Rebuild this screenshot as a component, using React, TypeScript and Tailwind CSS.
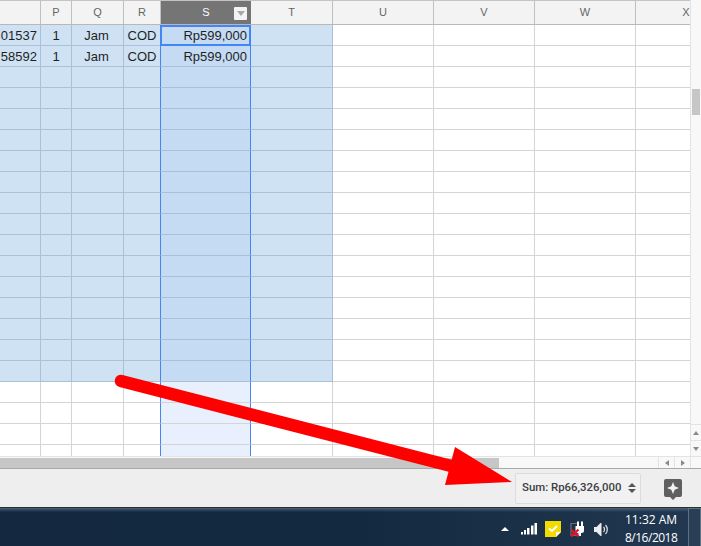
import React from 'react';

const cols = [
  { label: '', w: 'w-[41px]', sel: true },
  { label: 'P', w: 'w-[31px]', sel: true },
  { label: 'Q', w: 'w-[52px]', sel: true },
  { label: 'R', w: 'w-[37px]', sel: true },
  { label: 'S', w: 'w-[90px]', sel: true },
  { label: 'T', w: 'w-[82px]', sel: true },
  { label: 'U', w: 'w-[101px]', sel: false },
  { label: 'V', w: 'w-[101px]', sel: false },
  { label: 'W', w: 'w-[101px]', sel: false },
  { label: 'X', w: 'w-[101px]', sel: false },
];

const data: Record<number, string[]> = {
  0: ['01537', '1', 'Jam', 'COD', 'Rp599,000'],
  1: ['58592', '1', 'Jam', 'COD', 'Rp599,000'],
};

function Cell({ row, col }: { row: number; col: number }) {
  const c = cols[col];
  const selectedRow = row < 17;
  const isS = col === 4;
  let cls = 'border-r border-b border-[#d4d4d4] bg-white';
  if (selectedRow && c.sel) {
    cls = isS ? 'border-b border-[#adbfd6] bg-[#c5daf3]' : 'border-r border-b border-[#adbfd6] bg-[#cfe2f3]';
  } else if (isS) {
    cls = 'border-b border-[#d4d4d4] bg-[#e8f0fd]';
  }
  const text = data[row]?.[col];
  let align = 'justify-center';
  if (col === 0 || col === 4) align = 'justify-end pr-[3px]';
  if (col === 2) align = 'justify-center pr-[2px]';
  return (
    <div
      className={`${isS ? 'w-[91px] -ml-px border-x border-x-[#4285f4]' : `${c.w} overflow-hidden`} h-[21px] shrink-0 flex items-center relative pt-[2px] text-[13px] text-[#1f1f1f] ${align} ${cls}`}
    >
      {text}
      {isS && row === 0 && <div className="absolute -left-px -right-px top-0 -bottom-px border-2 border-[#4285f4]" />}
    </div>
  );
}

function Header() {
  return (
    <div className="flex h-[25px] bg-[#f3f3f3] border-b border-[#b8b8b8] border-t border-t-[#c4c4c4]">
      {cols.map((c, i) => (
        <div
          key={i}
          className={`${c.w} shrink-0 flex items-center justify-center relative text-[11px] ${i === 4 ? 'bg-[#757575] text-white' : 'border-r border-[#c0c0c0] text-[#666]'}`}
        >
          {c.label}
          {i === 4 && (
            <div className="absolute right-[4px] top-[6px] w-[13px] h-[13px] bg-[#f3f3f3] rounded-[1px] flex items-center justify-center">
              <div className="w-0 h-0 border-x-[4px] border-x-transparent border-t-[5px] border-t-[#a8a8a8]" />
            </div>
          )}
        </div>
      ))}
    </div>
  );
}

function SheetsExplore() {
  return (
    <svg width="18" height="21" viewBox="0 0 18 21">
      <path d="M2 0h14a2 2 0 0 1 2 2v14a2 2 0 0 1-2 2h-4l-3 3-3-3H2a2 2 0 0 1-2-2V2a2 2 0 0 1 2-2z" fill="#5f5f5f" />
      <path d="M9 3 10.7 7.3 15 9 10.7 10.7 9 15 7.3 10.7 3 9 7.3 7.3z" fill="#f2f2f2" />
    </svg>
  );
}

function Tray() {
  return (
    <div className="flex items-center mt-[3px] text-white">
      <div className="w-0 h-0 border-x-[4px] border-x-transparent border-b-[4px] border-b-white mr-[12px]" />
      <svg width="16" height="12" viewBox="0 0 16 12" className="mr-[8px]">
        <rect x="0" y="9" width="2" height="2.5" fill="#fff" />
        <rect x="3" y="7" width="2" height="4.5" fill="#fff" />
        <rect x="6" y="5" width="2.5" height="6.5" fill="#fff" />
        <rect x="10" y="2.5" width="2.5" height="9" fill="#fff" />
        <rect x="13.5" y="0" width="2.5" height="11.5" fill="#fff" />
      </svg>
      <svg width="16" height="16" viewBox="0 0 16 16" className="mr-[9px]">
        <path d="M0 0h16v11l-5 5H0z" fill="#f2dc00" />
        <path d="M16 11l-5 5v-5z" fill="#f4f4e8" />
        <path d="M4 7.5l3 2.5 5-5" fill="none" stroke="#fff" strokeWidth="2" />
      </svg>
      <svg width="15" height="16" viewBox="0 0 15 16" className="mr-[9px]">
        <path d="M1 2.5h7v12H1z" fill="none" stroke="#6a6f76" strokeWidth="1.2" />
        <path d="M5.5 5h8.5v4.5a2.5 2.5 0 0 1-2.5 2.5h-3.500a2.500 2.500 0 0 1-2.500-2.500z" fill="#fff" />
        <rect x="7" y="0.500" width="2" height="4.500" fill="#fff" />
        <rect x="11" y="0.500" width="2" height="4.500" fill="#fff" />
        <rect x="8.500" y="12" width="2.500" height="3" fill="#fff" />
        <path d="M1 8.500l7.500 7M8.500 8.500l-7.500 7" stroke="#e4142a" strokeWidth="2.200" />
      </svg>
      <svg width="14" height="13" viewBox="0 0 14 13">
        <path d="M0 4h2.500l4-4h1v13h-1l-4-4H0z" fill="#ececec" />
        <path d="M9.500 4a3.500 3.500 0 0 1 0 5M11.500 2a6.500 6.500 0 0 1 0 9" fill="none" stroke="#dfe5ea" strokeWidth="1.200" />
      </svg>
    </div>
  );
}

export default function App() {
  const rows = Array.from({ length: 21 }, (_, i) => i);
  return (
    <div className="w-[701px] h-[546px] overflow-hidden relative flex flex-col bg-white font-['Liberation_Sans',Arial,sans-serif]">
      <div className="flex h-[456px] shrink-0">
        <div className="w-[690px] shrink-0 overflow-hidden">
          <Header />
          {rows.map((r) => (
            <div key={r} className="flex">
              {cols.map((_, i) => (
                <Cell key={i} row={r} col={i} />
              ))}
            </div>
          ))}
        </div>
        <div className="flex-1 flex flex-col bg-[#f8f8f8] border-l border-[#e3e3e3]">
          <div className="h-[89px]" />
          <div className="h-[26px] ml-[1px] mr-[1px] bg-[#c6c6c6]" />
          <div className="flex-1" />
          <div className="h-[16px] flex items-center justify-center border-t border-[#e3e3e3]">
            <div className="w-0 h-0 border-x-[3px] border-x-transparent border-b-[4px] border-b-[#8a8a8a]" />
          </div>
          <div className="h-[16px] flex items-center justify-center border-t border-[#e3e3e3]">
            <div className="w-0 h-0 border-x-[3px] border-x-transparent border-t-[4px] border-t-[#8a8a8a]" />
          </div>
        </div>
      </div>

      <div className="h-[12px] shrink-0 flex bg-[#f8f8f8] border-t border-[#e3e3e3]">
        <div className="w-[499px] h-[10px] mt-px bg-[#c6c6c6]" />
        <div className="flex-1" />
        <div className="w-[16px] flex items-center justify-center border-l border-[#e3e3e3]">
          <div className="w-0 h-0 border-y-[3px] border-y-transparent border-r-[4px] border-r-[#8a8a8a]" />
        </div>
        <div className="w-[16px] flex items-center justify-center border-l border-[#e3e3e3]">
          <div className="w-0 h-0 border-y-[3px] border-y-transparent border-l-[4px] border-l-[#8a8a8a]" />
        </div>
        <div className="w-[11px] border-l border-[#e3e3e3]" />
      </div>

      <div className="h-[39px] shrink-0 flex items-center justify-end bg-[#eeeeee] border-t border-[#a9a9a9] pr-[19px]">
        <div className="h-[31px] w-[126px] mr-[23px] flex items-center justify-between pl-[6px] pr-[4px] border border-[#dcdcdc] rounded-[2px] bg-[#f1f1f1]">
          <span className="font-['Roboto',sans-serif] font-medium text-[11.4px] text-[#3c4043] whitespace-nowrap">Sum: Rp66,326,000</span>
          <div className="flex flex-col gap-[2px]">
            <div className="w-0 h-0 border-x-[4px] border-x-transparent border-b-[4px] border-b-[#555]" />
            <div className="w-0 h-0 border-x-[4px] border-x-transparent border-t-[4px] border-t-[#555]" />
          </div>
        </div>
        <div className="mt-[2px] flex">
          <SheetsExplore />
        </div>
      </div>

      <div className="flex-1 flex items-center justify-end relative border-t border-[#2a2f36] bg-gradient-to-r from-[#14293f] via-[#12293f] to-[#223850]">
        <div className="absolute left-0 right-0 top-0 h-[4px] bg-gradient-to-b from-[#4a6076] to-transparent" />
        <Tray />
        <div className="w-[52px] ml-[17px] mr-[11px] mt-[3px] font-['Open_Sans',sans-serif] text-[12px] leading-[18px] text-white whitespace-nowrap">
          <div className="text-center">11:32 AM</div>
          <div className="text-center tracking-[-0.5px]">8/16/2018</div>
        </div>
        <div className="w-[13px] h-full border border-[#5d7184] bg-[#2a3f55] relative" />
      </div>

      <svg className="absolute inset-0 pointer-events-none" width="701" height="546" viewBox="0 0 701 546">
        <line x1="121" y1="381" x2="455" y2="467" stroke="#ff0000" strokeWidth="12.5" strokeLinecap="round" />
        <polygon points="455,447 512,482 445,485" fill="#ff0000" />
      </svg>
    </div>
  );
}
